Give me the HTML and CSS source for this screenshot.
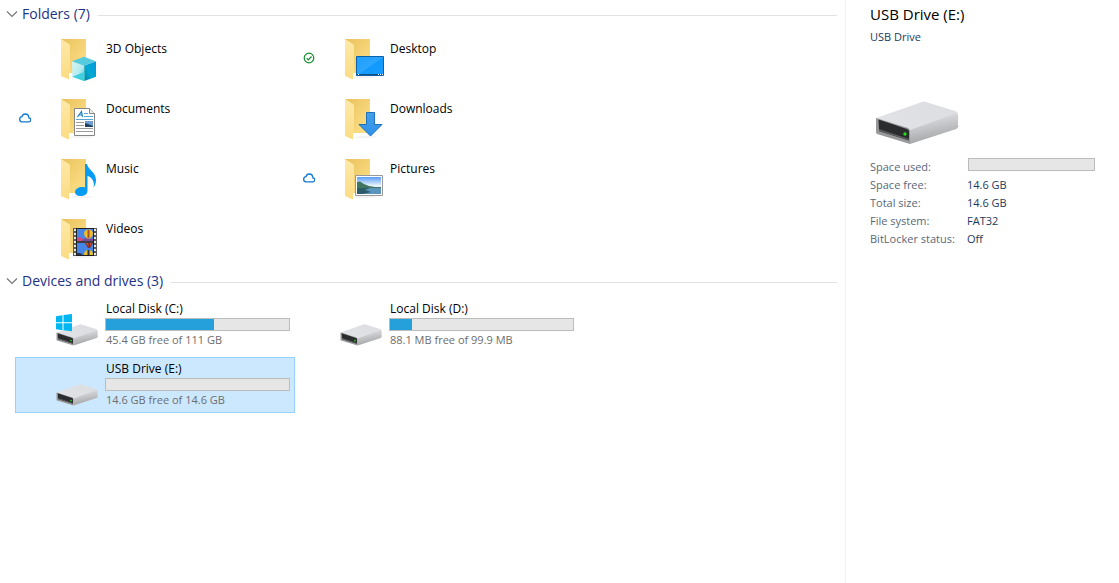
FILE: index.html
```html
<!DOCTYPE html>
<html lang="en">
<head>
    <meta charset="UTF-8">
    <meta name="viewport" content="width=device-width, initial-scale=1.0">
    <title>This PC</title>
    <link rel="stylesheet" href="styles.css">
</head>
<body>
    <!-- Shared shapes -->
    <svg class="defs" width="0" height="0" aria-hidden="true">
        <defs>
            <linearGradient id="folderBack" x1="0" y1="0" x2="1" y2="1">
                <stop offset="0" stop-color="#e9c15c"/>
                <stop offset="1" stop-color="#ffe38c"/>
            </linearGradient>
            <linearGradient id="folderFront" x1="0" y1="0" x2="0" y2="1">
                <stop offset="0" stop-color="#ffe9a8"/>
                <stop offset="1" stop-color="#fbdc84"/>
            </linearGradient>
            <linearGradient id="driveTop" x1="0" y1="1" x2="1" y2="0">
                <stop offset="0" stop-color="#e3e4e7"/>
                <stop offset="1" stop-color="#dcdde0"/>
            </linearGradient>
            <linearGradient id="driveSide" x1="0.4" y1="0.1" x2="0.6" y2="0.8">
                <stop offset="0" stop-color="#dcdde0"/>
                <stop offset="1" stop-color="#a9abad"/>
            </linearGradient>
            <linearGradient id="screen" x1="0" y1="0" x2="1" y2="1">
                <stop offset="0" stop-color="#1e9fff"/>
                <stop offset="0.5" stop-color="#2ba5ff"/>
                <stop offset="0.52" stop-color="#1199fc"/>
                <stop offset="1" stop-color="#1a9cff"/>
            </linearGradient>
            <linearGradient id="cubeLeft" x1="0" y1="0" x2="1" y2="1">
                <stop offset="0" stop-color="#d9f5f6"/>
                <stop offset="0.55" stop-color="#b4ecf0"/>
                <stop offset="1" stop-color="#37c8dc"/>
            </linearGradient>
            <linearGradient id="cubeRight" x1="0" y1="1" x2="1" y2="0">
                <stop offset="0" stop-color="#087f9b"/>
                <stop offset="0.4" stop-color="#00a9d2"/>
                <stop offset="1" stop-color="#0098e0"/>
            </linearGradient>
            <linearGradient id="sky" x1="0" y1="0" x2="0" y2="1">
                <stop offset="0" stop-color="#5b9df5"/>
                <stop offset="0.5" stop-color="#e6f3fc"/>
            </linearGradient>
            <linearGradient id="arrow" x1="0" y1="0" x2="0" y2="1">
                <stop offset="0" stop-color="#459fe8"/>
                <stop offset="1" stop-color="#2f91ea"/>
            </linearGradient>
            <symbol id="folder" viewBox="0 0 48 56">
                <path d="M15 41l5-2h20l-5 2z" fill="#f4f4f4"/>
                <path d="M7 2h25v34H7z" fill="url(#folderBack)"/>
                <path d="M7 2l8 5q1 .5 1 2v26l-1 1v6.500L8 39.500q-1-.5-1-1.500z" fill="url(#folderFront)"/>
            </symbol>
            <symbol id="drive" viewBox="0 0 86 44">
                <path d="M35 42l47-17 5 0-30 10z" fill="#000" opacity=".08"/>
                <path d="M1 17L47 1q2-1 4 0l29 9q3 1 3 4v12q0 1-2 2L37 42q-2 1-4 0z" fill="url(#driveTop)"/>
                <path d="M35 29L82 12l1 2v12q0 1-2 2L35 43z" fill="url(#driveSide)"/>
                <path d="M1 17l32 10q2 1 2 3v13L2 33q-1-1-1-2z" fill="#99999b"/>
                <path d="M3.500 18.500L32 28q2 1 2 2v9.500L4 30z" fill="#2b2c2d"/>
                <path d="M4 28l30 10v1.500L4 30z" fill="#5c5d5e"/>
                <circle cx="30" cy="33" r="1.700" fill="#24dc20"/>
            </symbol>
            <symbol id="cloud" viewBox="0 0 12 10">
                <path d="M3 8.800h6.500a2 2 0 0 0 .4-4C9.700 2.500 8.300 1 6.300 1 4.400 1 3.400 2.200 3 3.700 1.600 3.800.7 4.900.7 6.200.7 7.800 1.800 8.800 3 8.800z" fill="none" stroke="#0f78d2" stroke-width="1.300"/>
            </symbol>
        </defs>
    </svg>

    <div class="explorer">
        <main class="files">
            <section class="group">
                <h2 class="group-header">
                    <button type="button" class="group-toggle" aria-expanded="true">
                        <svg class="chevron" viewBox="0 0 12 8"><path d="M1 1.500l5 5 5-5" fill="none" stroke="#777" stroke-width="1.200"/></svg>
                        Folders (7)
                    </button>
                </h2>
                <div class="tiles">
                    <a class="tile" href="#">
                        <span class="status"></span>
                        <svg class="icon" viewBox="0 0 48 56">
                            <use href="#folder" width="48" height="56"/>
                            <path d="M18 24.300l12.300 4.300V44l-12-4.300z" fill="url(#cubeLeft)"/>
                            <path d="M30.300 28.600L42 24.300v15.400L30.300 44z" fill="url(#cubeRight)"/>
                            <path d="M18 24.300L30 19.700l12 4.600-11.700 4.500z" fill="#55cbe0"/>
                            <path d="M18.300 39.700l12-4.700V44z" fill="#3fd0de"/>
                        </svg>
                        <span class="info"><span class="name">3D Objects</span></span>
                    </a>
                    <a class="tile" href="#">
                        <span class="status">
                            <svg class="synced" viewBox="0 0 12 12"><circle cx="6" cy="6" r="4.800" fill="none" stroke="#138a2b" stroke-width="1.200"/><path d="M3.700 6.200l1.600 1.600 3.200-3.300" fill="none" stroke="#138a2b" stroke-width="1.200"/></svg>
                        </span>
                        <svg class="icon" viewBox="0 0 48 56">
                            <use href="#folder" width="48" height="56"/>
                            <path d="M18.500 19.500h27v19h-27z" fill="url(#screen)" stroke="#0b62a8"/>
                            <path d="M19 37h26v1H19z" fill="#0e4f86"/>
                            <path d="M20 37h1v1h-1zM40 37h1v1h-1zM42 37h1v1h-1zM44 37h1v1h-1z" fill="#fff"/>
                        </svg>
                        <span class="info"><span class="name">Desktop</span></span>
                    </a>
                    <a class="tile" href="#">
                        <span class="status"><svg class="cloud"><use href="#cloud"/></svg></span>
                        <svg class="icon" viewBox="0 0 48 56">
                            <use href="#folder" width="48" height="56"/>
                            <path d="M20.500 11.500h15l5 5v22h-20z" fill="#fff" stroke="#858585"/>
                            <path d="M35.500 11.500v5h5" fill="#eee" stroke="#858585"/>
                            <path d="M23.500 20l4-5.500 1 5.500M25 18h3" fill="none" stroke="#1a7fc4" stroke-width="1.200"/>
                            <path d="M30 16.500h4M30 19.500h9M22 22.500h17" stroke="#5aa5d8"/>
                            <path d="M22 25.500h8M22 28.500h8M22 31.500h17M22 34.500h17" stroke="#9a9a9a"/>
                            <path d="M31 24h8v6h-8z" fill="#6f9dd4"/>
                            <path d="M31 26l3 1 5 2v1h-8z" fill="#24405f"/>
                        </svg>
                        <span class="info"><span class="name">Documents</span></span>
                    </a>
                    <a class="tile" href="#">
                        <span class="status"></span>
                        <svg class="icon" viewBox="0 0 48 56">
                            <use href="#folder" width="48" height="56"/>
                            <path d="M28.500 15.500h8v12H44L32.500 39 21 27.500h7.500z" fill="url(#arrow)" stroke="#1d71bd"/>
                        </svg>
                        <span class="info"><span class="name">Downloads</span></span>
                    </a>
                    <a class="tile" href="#">
                        <span class="status"></span>
                        <svg class="icon" viewBox="0 0 48 56">
                            <use href="#folder" width="48" height="56"/>
                            <path d="M31 7h2c.5 5 9 8 9 16 0 3-1 6-2.500 7.500C41 25 38 20 33.500 19v15c0 3-3 5-7 5-3 0-5.500-1.500-5.500-4 0-3 3.500-5 7-5 1 0 2 .1 3 .5z" fill="#069bf4"/>
                        </svg>
                        <span class="info"><span class="name">Music</span></span>
                    </a>
                    <a class="tile" href="#">
                        <span class="status"><svg class="cloud"><use href="#cloud"/></svg></span>
                        <svg class="icon" viewBox="0 0 48 56">
                            <use href="#folder" width="48" height="56"/>
                            <path d="M17.500 18.500h27v20h-27z" fill="#fff" stroke="#999"/>
                            <path d="M19 20h24v17H19z" fill="url(#sky)"/>
                            <path d="M19 25l3-.5 4 2.500 5 2 6 1h6v2H19z" fill="#41755f"/>
                            <path d="M19 31h24v6H19z" fill="#5995bd"/>
                            <path d="M19 31h13l-5 2 6 2-8 2h-6z" fill="#2c5c68"/>
                        </svg>
                        <span class="info"><span class="name">Pictures</span></span>
                    </a>
                    <a class="tile" href="#">
                        <span class="status"></span>
                        <svg class="icon" viewBox="0 0 48 56">
                            <use href="#folder" width="48" height="56"/>
                            <path d="M19 11h24v28H19z" fill="#5c5c5c"/>
                            <path d="M21 12v27M41 12v27" stroke="#e8e8e8" stroke-width="2" stroke-dasharray="2 2"/>
                            <path d="M23 12h16v12H23zM23 26h16v12H23z" fill="#4585e8"/>
                            <path d="M23 21l3-1 3 2 4 2H23z" fill="#d6457c"/>
                            <path d="M28 23l4-2 7 1v2H28z" fill="#7a4a9c"/>
                            <path d="M30 17q0-4.500 4.500-4.500T39 17q0 2-3 4.500h-3Q30 19 30 17z" fill="#f1bd27"/>
                            <path d="M33.500 13h2v8h-2z" fill="#a8552a"/>
                            <path d="M31 26h8l-3 5h-2z" fill="#7a3123"/>
                            <path d="M32 26h2l1 4zM36 26h2l-2 3z" fill="#e64a32"/>
                            <path d="M30 38q0-5 4.500-5t4.500 5z" fill="#f1bd27"/>
                            <path d="M23 36l3 0 3 2h-6zM33.500 33h2v5h-2z" fill="#26354e"/>
                            <path d="M22.500 11v28M39.500 11v28M23 25h16M23 11.500h16M23 38.500h16" stroke="#202020"/>
                        </svg>
                        <span class="info"><span class="name">Videos</span></span>
                    </a>
                </div>
            </section>

            <section class="group drives">
                <h2 class="group-header">
                    <button type="button" class="group-toggle" aria-expanded="true">
                        <svg class="chevron" viewBox="0 0 12 8"><path d="M1 1.500l5 5 5-5" fill="none" stroke="#777" stroke-width="1.200"/></svg>
                        Devices and drives (3)
                    </button>
                </h2>
                <div class="tiles">
                    <a class="tile" href="#">
                        <span class="status"></span>
                        <svg class="icon" viewBox="0 0 48 56">
                            <use href="#drive" x="2" y="27" width="43" height="22"/>
                            <path d="M2 19.200l6.500-.9v7H2zM9.500 18.100L18 17v8.300H9.500zM2 26.300h6.500v6.900L2 32.300zM9.500 26.300H18v8l-8.500-1.100z" fill="#00b7f1"/>
                        </svg>
                        <span class="info">
                            <span class="name">Local Disk (C:)</span>
                            <span class="bar"><span class="bar-fill" style="width: 59%"></span></span>
                            <span class="free">45.4 GB free of 111 GB</span>
                        </span>
                    </a>
                    <a class="tile" href="#">
                        <span class="status"></span>
                        <svg class="icon" viewBox="0 0 48 56">
                            <use href="#drive" x="2" y="27" width="43" height="22"/>
                        </svg>
                        <span class="info">
                            <span class="name">Local Disk (D:)</span>
                            <span class="bar"><span class="bar-fill" style="width: 12%"></span></span>
                            <span class="free">88.1 MB free of 99.9 MB</span>
                        </span>
                    </a>
                    <a class="tile selected" href="#">
                        <span class="status"></span>
                        <svg class="icon" viewBox="0 0 48 56">
                            <use href="#drive" x="2" y="27" width="43" height="22"/>
                        </svg>
                        <span class="info">
                            <span class="name">USB Drive (E:)</span>
                            <span class="bar"></span>
                            <span class="free">14.6 GB free of 14.6 GB</span>
                        </span>
                    </a>
                </div>
            </section>
        </main>

        <aside class="details">
            <h1 class="details-title">USB Drive (E:)</h1>
            <p class="details-type">USB Drive</p>
            <svg class="preview"><use href="#drive"/></svg>
            <dl class="props">
                <dt>Space used:</dt><dd><span class="bar"></span></dd>
                <dt>Space free:</dt><dd>14.6 GB</dd>
                <dt>Total size:</dt><dd>14.6 GB</dd>
                <dt>File system:</dt><dd>FAT32</dd>
                <dt>BitLocker status:</dt><dd>Off</dd>
            </dl>
        </aside>
    </div>
</body>
</html>
```
FILE: styles.css
```css
* {
    box-sizing: border-box;
}

body {
    margin: 0;
    font-family: "Segoe UI", "Open Sans", sans-serif;
    font-size: 12px;
    line-height: 16px;
    color: #000;
    background-color: #fff;
}

.defs {
    display: block;
}

.explorer {
    display: flex;
    min-height: 100vh;
}

.files {
    flex: 1;
    padding: 6px 8px 0 6px;
}

.group-header {
    display: flex;
    align-items: center;
    gap: 8px;
    height: 18px;
    margin: 0 0 13px;
}

.group-header::after {
    content: "";
    flex: 1;
    height: 1px;
    background-color: #e2e2e2;
}

.drives .group-header {
    margin-bottom: 6px;
}

.group-toggle {
    display: flex;
    align-items: center;
    gap: 4px;
    padding: 0 0 2px;
    border: none;
    background: none;
    font-family: inherit;
    font-size: 14px;
    line-height: 16px;
    color: #1e3287;
}

.chevron {
    width: 12px;
    height: 8px;
}

.tiles {
    display: grid;
    grid-template-columns: repeat(auto-fill, 280px);
    gap: 4px;
    padding-left: 9px;
}

.tile {
    display: flex;
    height: 56px;
    color: inherit;
    text-decoration: none;
}

.tile.selected {
    background-color: #cce8ff;
    box-shadow: inset 0 0 0 1px #99d1ff;
}

.status {
    display: flex;
    align-items: center;
    width: 39px;
    padding: 0 0 14px 4px;
}

.cloud {
    width: 12px;
    height: 10px;
}

.synced {
    width: 12px;
    height: 12px;
}

.icon {
    width: 48px;
    height: 56px;
}

.info {
    display: flex;
    flex-direction: column;
    flex: 1;
    padding: 4px 5px 0 3px;
}

.name,
.free {
    padding-left: 1px;
}

.free {
    font-size: 11px;
    color: #6d6d6d;
}

.bar {
    display: block;
    height: 13px;
    margin: 1px 0;
    border: 1px solid #bcbcbc;
    background-color: #e6e6e6;
}

.bar-fill {
    display: block;
    height: 100%;
    background-color: #26a0da;
}

.details {
    width: 274px;
    padding: 4px 24px;
    border-left: 1px solid #f3f3f3;
}

.details-title {
    margin: 0;
    font-size: 15px;
    font-weight: normal;
    line-height: 20px;
}

.details-type {
    margin: 5px 0 56px;
    font-size: 11px;
    color: #1e395b;
}

.preview {
    display: block;
    width: 86px;
    height: 44px;
    margin-left: 5px;
}

.props {
    display: grid;
    grid-template-columns: 97px 1fr;
    margin: 13px 0 0;
    font-size: 11px;
    line-height: 18px;
}

.props dt {
    color: #5a6779;
}

.props dd {
    margin: 0;
    color: #1e395b;
}

.props .bar {
    margin: 0 0 0 1px;
}
```
